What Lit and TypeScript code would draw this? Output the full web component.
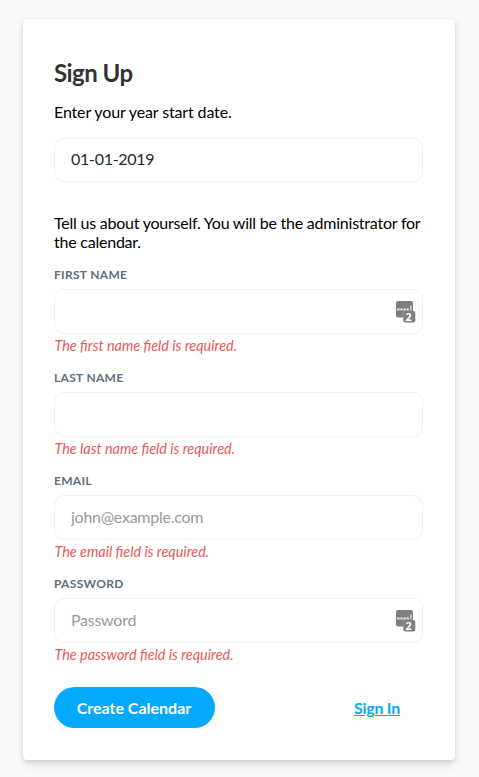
import { LitElement, html, css, svg, nothing } from "lit";
import { customElement, property } from "lit/decorators.js";

@customElement("password-badge")
class PasswordBadge extends LitElement {
  static styles = css`
    :host { display: block; width: 20px; height: 22px; }
    svg { display: block; }
    .shape { fill: #7f7f7f; }
    .halo { fill: #fff; }
    .dot { fill: #e6e6e6; }
    .count { fill: #fff; font: 700 10.5px "Open Sans", sans-serif; }
  `;
  render() {
    return html`<svg width="20" height="22" viewBox="0 0 20 22">
      <rect class="shape" x="0" y="0" width="17" height="16.6" rx="2" />
      ${[2.4, 5.5, 8.6, 11.7].map((x) => svg`<circle class="dot" cx=${x} cy="8.4" r="1.2" />`)}
      <rect class="dot" x="14.3" y="4.4" width="1.2" height="5" />
      <rect class="halo" x="6.8" y="9.8" width="12.7" height="12.2" rx="2" opacity="0.35" />
      <rect class="shape" x="7.3" y="10" width="12" height="11.6" rx="2" />
      <text class="count" x="12.6" y="19.8" text-anchor="middle">2</text>
    </svg>`;
  }
}

@customElement("form-field")
class FormField extends LitElement {
  @property() label = "";
  @property() type = "text";
  @property() placeholder = "";
  @property() error = "";
  @property({ type: Boolean }) badge = false;

  static styles = css`
    :host { display: block; height: 103px; }
    .label {
      display: block;
      font-size: 12px;
      line-height: 14px;
      font-weight: 700;
      letter-spacing: 0.3px;
      text-transform: uppercase;
      color: #606f7b;
      margin-bottom: 7px;
    }
    .box {
      box-sizing: border-box;
      display: flex;
      align-items: center;
      height: 45px;
      border: 1px solid #f1f1f1;
      border-radius: 10px;
      padding: 0 6px 0 16px;
    }
    input {
      flex: 1;
      min-width: 0;
      border: 0;
      padding: 0 0 2px;
      outline: 0;
      background: transparent;
      font: inherit;
      letter-spacing: -0.26px;
      color: #22292f;
    }
    input::placeholder { color: #9a9a9a; opacity: 1; }
    .error {
      margin: 3px 0 0;
      padding-left: 0.5px;
      font-size: 14.4px;
      line-height: 17px;
      font-style: italic;
      color: #e9585b;
    }
  `;
  render() {
    return html`
      <label class="label" for="control">${this.label}</label>
      <div class="box">
        <input id="control" type=${this.type} placeholder=${this.placeholder} />
        ${this.badge ? html`<password-badge></password-badge>` : nothing}
      </div>
      <p class="error">${this.error}</p>
    `;
  }
}

@customElement("app-root")
class AppRoot extends LitElement {
  static styles = css`
    :host {
      display: block;
      box-sizing: border-box;
      min-height: 777px;
      padding: 19px 24px 17px 23px;
      background: #f8fafc;
      font-family: Lato, sans-serif;
      font-size: 16px;
      font-weight: 400;
      line-height: 19px;
      color: #000;
    }
    .card {
      box-sizing: border-box;
      height: 741px;
      padding: 39px 32px 32px 31px;
      border-radius: 4px;
      background: #fff;
      box-shadow: 0 4px 8px 0 rgba(0, 0, 0, 0.12), 0 2px 4px 0 rgba(0, 0, 0, 0.08);
    }
    h1 {
      margin: 0 0 15px;
      font-size: 24px;
      line-height: 29px;
      font-weight: 700;
      letter-spacing: -0.55px;
      color: #333;
    }
    p { margin: 0; letter-spacing: -0.23px; }
    .intro { letter-spacing: -0.14px; }
    .date {
      box-sizing: border-box;
      display: block;
      width: 100%;
      height: 44px;
      margin: 17px 0 31px;
      padding: 0 16px 3px;
      border: 1px solid #f1f1f1;
      border-radius: 10px;
      background: #fff;
      font: inherit;
      letter-spacing: -0.28px;
      color: #22292f;
    }
    .fields { margin-top: 17px; }
    .actions {
      display: flex;
      align-items: center;
      justify-content: space-between;
      margin-top: 7px;
      padding-right: 23px;
    }
    button {
      width: 161px;
      height: 41px;
      padding: 0 1px 0 0;
      border: 0;
      border-radius: 21px;
      background: #03a9fc;
      color: #fff;
      font: inherit;
      font-weight: 700;
    }
    a {
      color: #03a9f4;
      font-weight: 700;
      letter-spacing: -0.25px;
      text-decoration: underline;
    }
  `;
  render() {
    return html`
      <form class="card">
        <h1>Sign Up</h1>
        <p class="intro">Enter your year start date.</p>
        <input class="date" type="text" value="01-01-2019" />
        <p>Tell us about yourself. You will be the administrator for the calendar.</p>
        <div class="fields">
          <form-field label="First Name" error="The first name field is required." badge></form-field>
          <form-field label="Last Name" error="The last name field is required."></form-field>
          <form-field label="Email" type="email" placeholder="john@example.com" error="The email field is required."></form-field>
          <form-field label="Password" type="password" placeholder="Password" error="The password field is required." badge></form-field>
        </div>
        <div class="actions">
          <button type="button">Create Calendar</button>
          <a href="#">Sign In</a>
        </div>
      </form>
    `;
  }
}
